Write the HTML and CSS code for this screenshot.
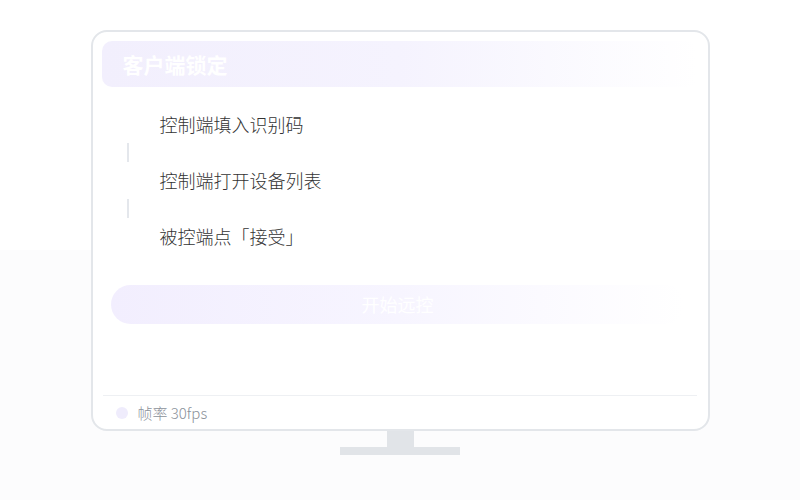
FILE: index.html
```html
<!DOCTYPE html>
<html lang="zh">
<head>
<meta charset="utf-8">
<link rel="stylesheet" href="styles.css">
</head>
<body>
<div class="stage">
  <div class="monitor">
    <div class="header">客户端锁定</div>
    <div class="steps">
      <div class="step">控制端填入识别码</div>
      <div class="connector"><span class="bar"></span></div>
      <div class="step">控制端打开设备列表</div>
      <div class="connector"><span class="bar"></span></div>
      <div class="step">被控端点「接受」</div>
    </div>
    <div class="btn">开始远控</div>
    <div class="spacer"></div>
    <div class="footer">
      <span class="dot"></span>
      <span class="fps">帧率 30fps</span>
    </div>
  </div>
  <div class="neck"></div>
  <div class="base"></div>
</div>
</body>
</html>
```

FILE: styles.css
```css
html, body {
  margin: 0;
  padding: 0;
}
body {
  width: 800px;
  height: 500px;
  background: linear-gradient(180deg, #ffffff 0, #ffffff 250px, #fcfcfd 250px, #fcfcfd 100%);
  font-family: "Noto Sans CJK SC", "Noto Sans", sans-serif;
  overflow: hidden;
}
.stage {
  padding-top: 30px;
  display: flex;
  flex-direction: column;
  align-items: center;
}
.monitor {
  width: 619px;
  height: 401px;
  box-sizing: border-box;
  border: 2px solid #e3e6ea;
  border-radius: 16px;
  background: #ffffff;
  padding: 9px 11px 0 9px;
  display: flex;
  flex-direction: column;
}
.header {
  height: 46px;
  border-radius: 10px;
  background: linear-gradient(90deg, #f2effd 0%, #f5f3fe 50%, rgba(255,255,255,0) 100%);
  color: #ffffff;
  font-weight: 700;
  font-size: 21px;
  line-height: 46px;
  padding-left: 21px;
}
.steps {
  margin-top: 25px;
  display: flex;
  flex-direction: column;
}
.step {
  height: 24px;
  line-height: 24px;
  font-size: 18px;
  font-weight: 300;
  color: #333333;
  padding-left: 58px;
}
.connector {
  height: 32px;
  padding-left: 25px;
  display: flex;
}
.bar {
  display: block;
  width: 2px;
  height: 19px;
  margin-top: 7px;
  background: #e4e7ec;
}
.btn {
  margin-top: 37px;
  margin-left: 9px;
  width: 574px;
  height: 39px;
  border-radius: 20px;
  background: linear-gradient(90deg, #f2eefe 0%, #f7f5ff 50%, rgba(255,255,255,0) 100%);
  color: #ffffff;
  font-size: 18px;
  line-height: 39px;
  text-align: center;
}
.spacer {
  flex: 1;
}
.footer {
  height: 33px;
  border-top: 1px solid #eef0f3;
  margin-left: 1px;
  display: flex;
  align-items: center;
  padding-left: 13px;
}
.dot {
  width: 12px;
  height: 12px;
  border-radius: 50%;
  background: #efecfc;
  margin-right: 10px;
}
.fps {
  font-size: 15px;
  font-weight: 300;
  color: #8b919a;
}
.neck {
  width: 27px;
  height: 16px;
  background: #e1e4e8;
}
.base {
  width: 120px;
  height: 8px;
  background: #e1e4e8;
}
```
